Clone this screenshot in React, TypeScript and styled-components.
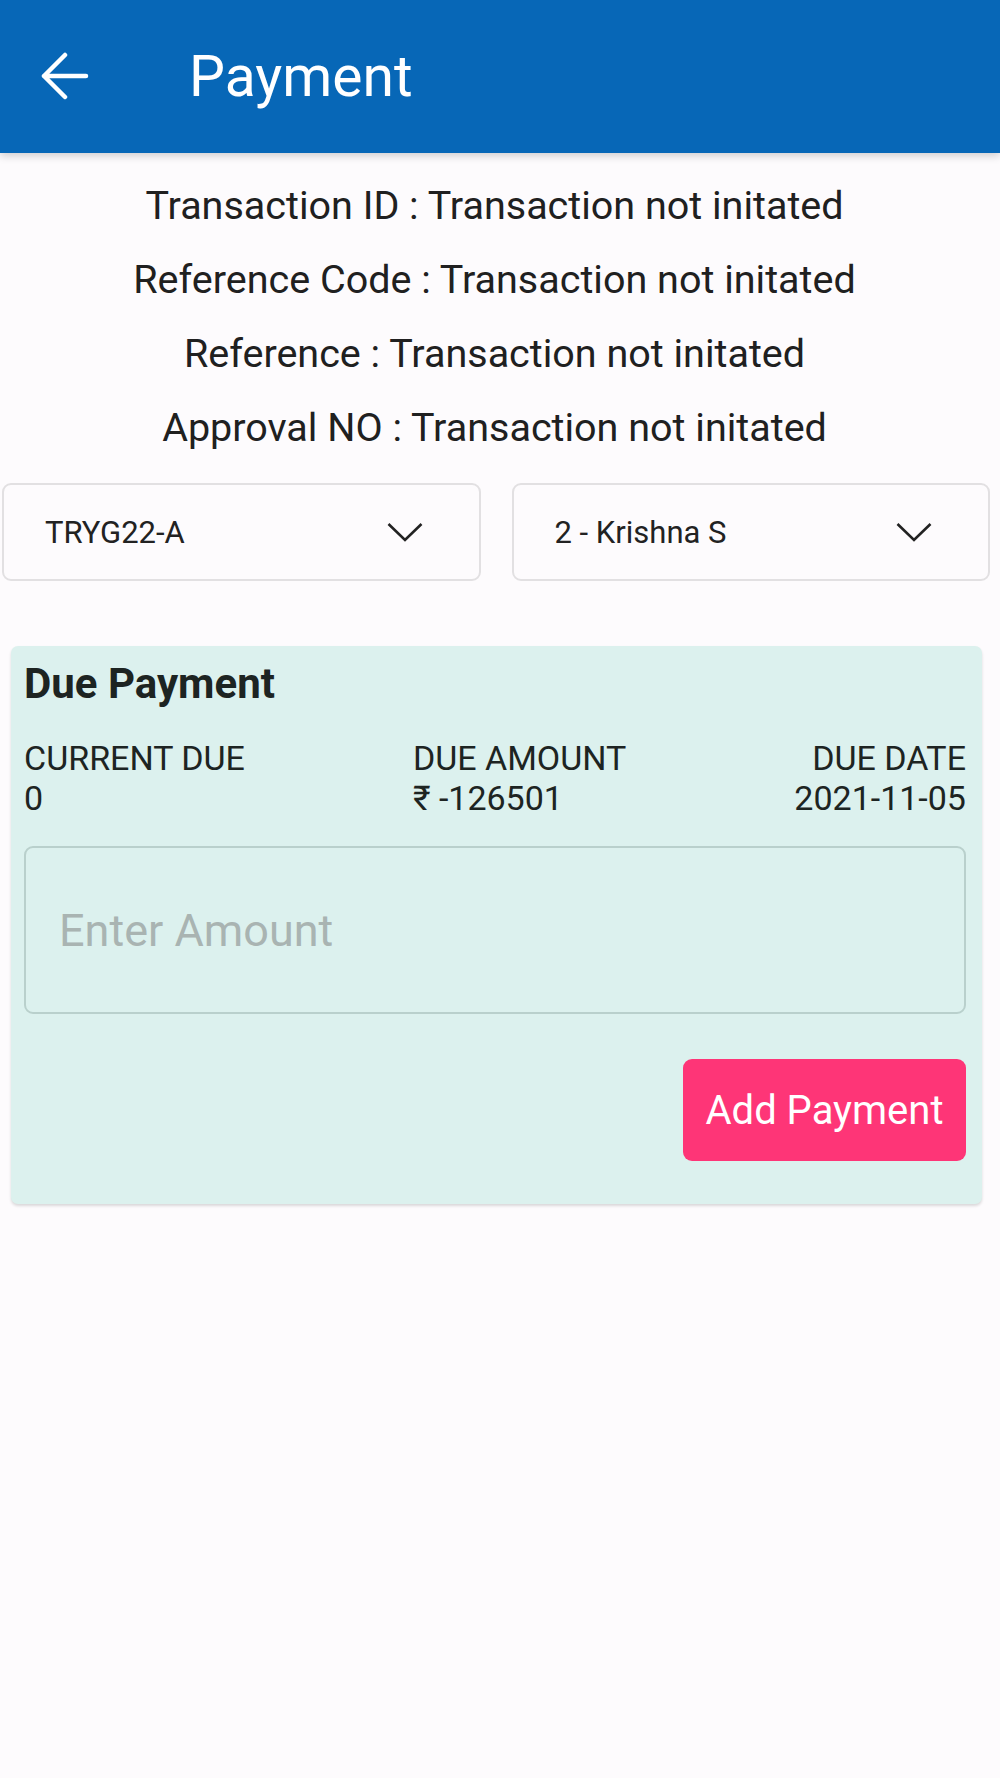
import { styled, createGlobalStyle } from "styled-components";

const GlobalStyle = createGlobalStyle`
  html, body {
    margin: 0;
    padding: 0;
    background-color: #fdfbfd;
    font-family: Roboto, "Noto Sans", "Liberation Sans", sans-serif;
  }
  * {
    box-sizing: border-box;
  }
`;

const TRANSACTION_INFO = [
  { label: "Transaction ID", value: "Transaction not initated" },
  { label: "Reference Code", value: "Transaction not initated" },
  { label: "Reference", value: "Transaction not initated" },
  { label: "Approval NO", value: "Transaction not initated" },
];

const DUES = [
  { label: "CURRENT DUE", value: "0", align: "left" },
  { label: "DUE AMOUNT", value: "₹ -126501", align: "left" },
  { label: "DUE DATE", value: "2021-11-05", align: "right" },
] as const;

const BackArrow = () => (
  <svg width="48" height="48" viewBox="0 0 48 48" fill="none">
    <path
      d="M45 24H3M24 3L3 24l21 21"
      stroke="#ffffff"
      strokeWidth="4.5"
      strokeLinecap="round"
      strokeLinejoin="round"
    />
  </svg>
);

const Chevron = () => (
  <svg width="36" height="20" viewBox="0 0 36 20" fill="none">
    <path d="M1.5 2L18 18 34.5 2" stroke="#222222" strokeWidth="2.6" />
  </svg>
);

const App = () => {
  return (
    <>
      <GlobalStyle />
      <Page>
        <Header>
          <BackButton aria-label="back">
            <BackArrow />
          </BackButton>
          <Title>Payment</Title>
        </Header>

        <InfoList>
          {TRANSACTION_INFO.map((item) => (
            <InfoLine key={item.label}>
              {item.label} : {item.value}
            </InfoLine>
          ))}
        </InfoList>

        <SelectRow>
          <Select>
            <span>TRYG22-A</span>
            <Chevron />
          </Select>
          <Select>
            <span>2 - Krishna S</span>
            <Chevron />
          </Select>
        </SelectRow>

        <Card>
          <CardTitle>Due Payment</CardTitle>
          <DueRow>
            {DUES.map((due) => (
              <DueItem key={due.label} $align={due.align}>
                <div>{due.label}</div>
                <div>{due.value}</div>
              </DueItem>
            ))}
          </DueRow>
          <AmountInput placeholder="Enter Amount" />
          <Actions>
            <AddButton>Add Payment</AddButton>
          </Actions>
        </Card>
      </Page>
    </>
  );
};

const Page = styled.div`
  width: 1000px;
  min-height: 1778px;
  background-color: #fdfbfd;
`;

const Header = styled.header`
  height: 153px;
  display: flex;
  align-items: center;
  padding-left: 41px;
  gap: 100px;
  background-color: #0767b7;
  box-shadow: 0 3px 8px rgba(0, 0, 0, 0.18);
`;

const BackButton = styled.button`
  width: 48px;
  height: 48px;
  padding: 0;
  border: none;
  background: transparent;
  display: flex;
  margin-top: -2px;
`;

const Title = styled.h1`
  margin: 0;
  font-size: 57px;
  font-weight: 400;
  color: #ffffff;
`;

const InfoList = styled.div`
  padding: 16px 11px 0 0;
  display: flex;
  flex-direction: column;
  align-items: center;
`;

const InfoLine = styled.div`
  font-size: 39.5px;
  line-height: 74px;
  color: #202020;
`;

const SelectRow = styled.div`
  margin-top: 18px;
  padding: 0 10px 0 2px;
  display: grid;
  grid-template-columns: 1fr 1fr;
  gap: 31px;
`;

const Select = styled.div`
  height: 98px;
  display: flex;
  align-items: center;
  justify-content: space-between;
  padding: 0 56px 0 41px;
  border: 2px solid #e2e0e2;
  border-radius: 9px;
  font-size: 31px;
  color: #222222;
`;

const Card = styled.section`
  margin: 65px 18px 0 11px;
  padding: 14px 16px 43px 13px;
  border-radius: 7px;
  background-color: #dcf1ee;
  box-shadow: 0 2px 3px rgba(0, 0, 0, 0.14);
  color: #1d2422;
`;

const CardTitle = styled.h2`
  margin: 0;
  font-size: 42px;
  line-height: 48px;
  font-weight: 700;
`;

const DueRow = styled.div`
  margin-top: 30px;
  display: flex;
  justify-content: space-between;
`;

const DueItem = styled.div<{ $align: "left" | "right" }>`
  font-size: 34px;
  line-height: 40px;
  text-align: ${(p) => p.$align};
`;

const AmountInput = styled.input`
  display: block;
  width: 100%;
  height: 168px;
  margin-top: 28px;
  padding: 0 33px;
  border: 2px solid #b9d0cc;
  border-radius: 9px;
  background-color: transparent;
  font-family: inherit;
  font-size: 45px;
  color: #1d2422;
  outline: none;

  &::placeholder {
    color: #a9b4b2;
  }
`;

const Actions = styled.div`
  margin-top: 45px;
  display: flex;
  justify-content: flex-end;
`;

const AddButton = styled.button`
  width: 283px;
  height: 102px;
  border: none;
  border-radius: 9px;
  background-color: #fe3577;
  color: #ffffff;
  font-family: inherit;
  font-size: 40px;
`;

export default App;
